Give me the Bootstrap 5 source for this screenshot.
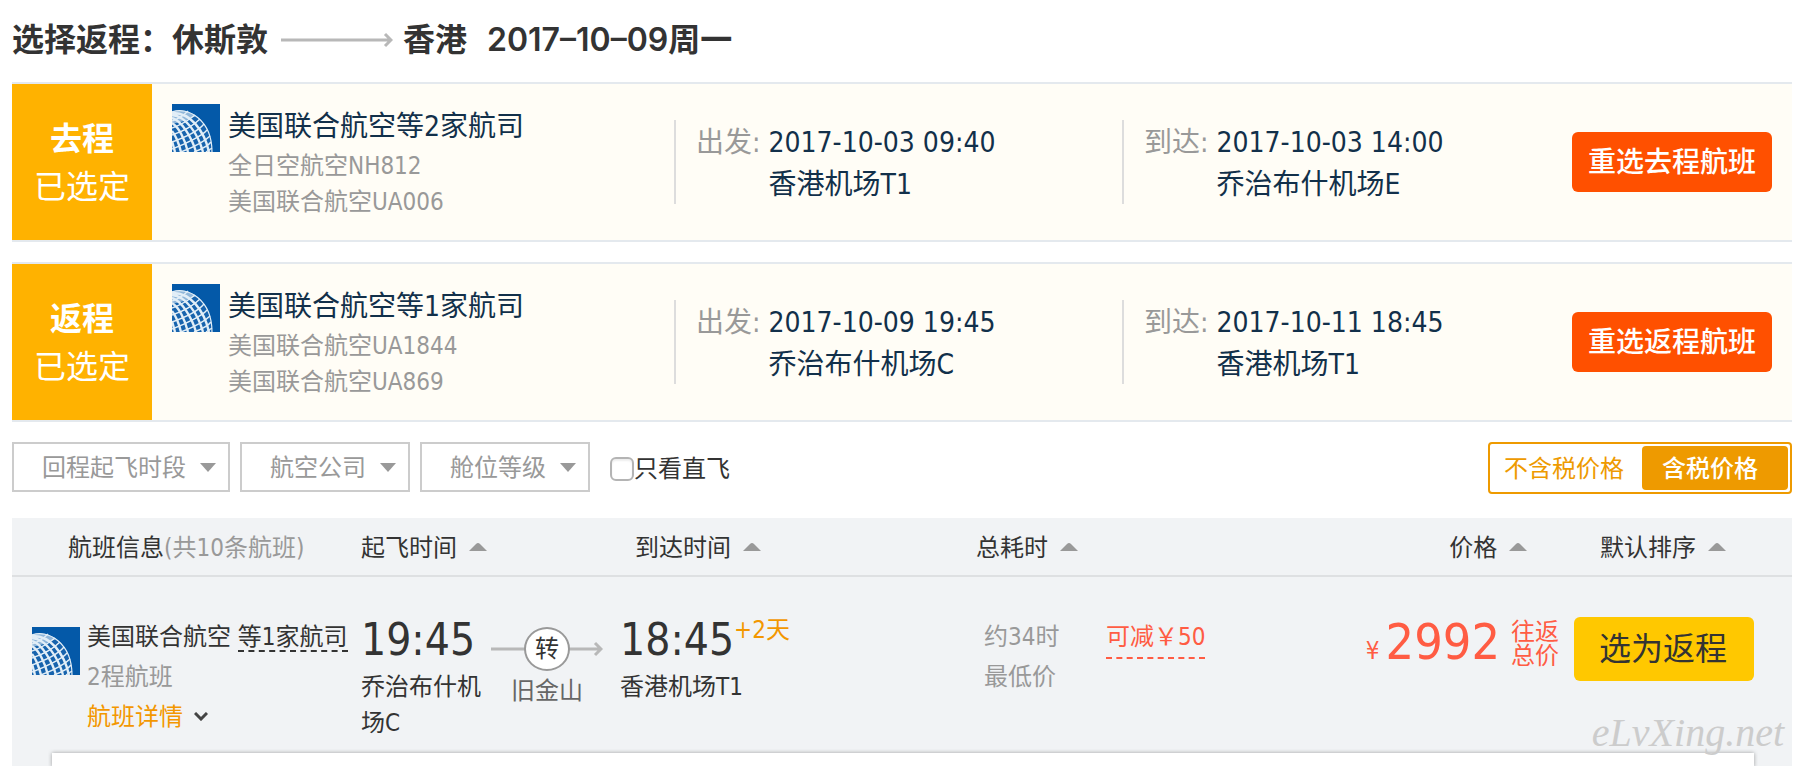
<!DOCTYPE html>
<html lang="zh-CN">
<head>
<meta charset="utf-8">
<meta name="viewport" content="width=device-width, initial-scale=1">
<title>选择返程</title>
<link href="https://cdn.jsdelivr.net/npm/bootstrap@5.3.0/dist/css/bootstrap.min.css" rel="stylesheet">
<style>
  body { font-family: "DejaVu Sans Condensed", "Noto Sans CJK SC", sans-serif; font-size: 24px; line-height: 36px; color: #333; background: #fff; }
  .page { padding: 16px 2px 0 12px; }
  .trip-title { font-family: Inter, "Noto Sans CJK SC", sans-serif; font-size: 32px; font-weight: 600; line-height: 48px; margin: 0 0 18px; }
  .trip-title svg { margin: 0 10px 0 13px; }
  .trip-title .day { margin-left: 20px; }
  .trip { display: grid; grid-template-columns: 140px 522fr 448fr 450fr 200px; align-items: center; height: 160px; padding-right: 20px; margin-bottom: 20px; background: #fffdf6; border-top: 2px solid #e4e9ee; border-bottom: 2px solid #e4e9ee; color: #12304a; }
  .trip-tag { background: #ffb200; color: #fff; font-size: 32px; line-height: 48px; padding-top: 2px; }
  .carrier { padding: 0 0 0 20px; gap: 8px; }
  .carrier h2 { font-size: 28px; line-height: 42px; margin: 0; padding-top: 2px; font-weight: 400; }
  .muted { color: #999; }
  .leg { height: 84px; border-left: 2px solid #ddd; padding: 2px 0 0 20px; gap: 8px; font-size: 28px; line-height: 42px; margin: 0; }
  .leg dt { font-weight: 400; color: #999; }
  .leg dd { margin: 0; }
  .btn-rechoose { background: #ff5000; color: #fff; font-size: 28px; line-height: 42px; font-weight: 500; height: 60px; border: 0; border-radius: 6px; padding: 2px 0 0; white-space: nowrap; }
  .btn-rechoose:hover { background: #e64800; color: #fff; }
  .filters { gap: 10px; margin-bottom: 24px; }
  .filter-pick { width: auto; height: 50px; border: 2px solid #ccc; border-radius: 0; padding: 2px 40px 0 28px; font-size: 24px; line-height: 36px; color: #999; background-color: #fff; background-image: url("data:image/svg+xml,%3Csvg xmlns='http://www.w3.org/2000/svg' viewBox='0 0 16 9'%3E%3Cpath d='M0 0h16L8 9z' fill='%23999'/%3E%3C/svg%3E"); background-size: 16px 9px; background-position: right 12px center; }
  .filter-pick:first-child { width: 218px; }
  .filter-pick:not(:first-child) { width: 170px; }
  .direct { height: 52px; margin-left: 10px; padding-top: 2px; }
  .direct .form-check-input { width: 24px; height: 24px; margin: 0; border: 2px solid #b4b4b4; border-radius: 6px; box-shadow: inset 0 2px 2px #eee; }
  .tax-switch { border: 2px solid #ee9a00; border-radius: 4px; padding: 2px; }
  .tax-switch .btn { height: 44px; border: 0; border-radius: 4px; font-size: 24px; line-height: 36px; padding: 2px 18px 0 12px; color: #ee9a00; }
  .tax-switch .btn.active { background: #ee9a00; color: #fff; font-weight: 500; padding: 2px 30px 0 20px; }
  .results { background: #f1f3f5; }
  .flights { table-layout: fixed; width: 100%; margin: 0; }
  .flights th { height: 58px; padding: 2px 0 0; font-weight: 400; border-bottom: 2px solid #dee0e2; white-space: nowrap; }
  .flights td { padding: 40px 0 12px; vertical-align: top; line-height: 40px; }
  .flights th:first-child { padding-left: 56px; }
  .flights th.to-arrive { padding-left: 15px; }
  .flights th.to-price { padding-right: 47px; text-align: right; }
  .flights th.to-sort { padding-left: 26px; }
  .flights td.spent { padding-left: 8px; }
  .flights td:first-child { padding-left: 20px; }
  .sort { color: inherit; text-decoration: none; }
  .sort svg { margin-left: 5px; vertical-align: 5px; }
  .c-info { width: 349px; } .c-leave { width: 129px; } .c-via { width: 130px; } .c-arrive { width: 20%; }
  .c-spent { width: 130px; } .c-price { width: 234px; } .c-pick { width: 218px; }
  .airline { gap: 7px; white-space: nowrap; }
  .airline > svg { margin-top: 10px; }
  .dashed { display: inline-block; color: inherit; line-height: 26px; border-bottom: 2px dashed; text-decoration: none; }
  .detail { color: #f39700; text-decoration: none; }
  .detail svg { margin-left: 4px; vertical-align: 4px; }
  .clock { font-size: 44px; line-height: 46px; margin-bottom: 6px; }
  .clock sup { font-size: 24px; line-height: 26px; color: #f39700; top: 0; vertical-align: top; }
  .port { line-height: 36px; width: 126px; }
  .via { width: 114px; color: #666; text-align: center; }
  .via-line { display: grid; justify-items: center; align-items: center; margin-top: 10px; }
  .via-line > * { grid-area: 1 / 1; }
  .via-dot { width: 46px; height: 44px; border: 2px solid #999; border-radius: 50%; background: #fff; color: #333; line-height: 40px; z-index: 1; }
  .red { color: #ff5c43; }
  .discount { line-height: 40px; }
  .fare { gap: 11px; padding-right: 15px; }
  .fare .sum { font-size: 50px; line-height: 50px; }
  .fare .yen { font-size: 24px; margin-right: 6px; }
  .fare .kind { line-height: 24px; width: 48px; margin-top: 3px; }
  .btn-choose { width: 180px; height: 64px; background: #ffc800; color: #333; border: 0; border-radius: 6px; font-size: 32px; line-height: 48px; padding: 0 2px 0 0; }
  .btn-choose:hover { background: #f0bc00; }
  .panel { margin: 0 38px 0 40px; min-height: 14px; background: #fff; box-shadow: 0 0 4px rgba(0,0,0,.35); clip-path: inset(-4px -4px 0 -4px); }
  .site-mark { right: 8px; bottom: 10px; font: italic 40px/48px "Liberation Serif", serif; color: #ccc; }
</style>
</head>
<body>
<svg class="d-none" aria-hidden="true">
  <symbol id="globe" viewBox="0 0 48 48">
    <path fill="#0459a8" d="M0 0h48v48H0z"/>
    <path fill="#1763ad" d="M0 8C16 2 40 16 40 48H0z"/>
    <path fill="#c3daed" d="M0 8C8 5 18 7 24 12L12 17 0 20z" opacity=".7"/>
    <g fill="none" stroke="#e2eef7">
      <path d="M0 8C16 2 40 16 40 48" stroke-width="1.2"/>
      <path stroke-width="2.4" d="M0 9C18 8 32 26 37 48M0 11C14 12 26 30 31 48M0 14C10 17 20 34 24 48M0 19C7 23 13 36 16 48M0 27C4 32 7 40 9 48M0 37 3 48"/>
      <path stroke-width="1.4" d="M0 17C6 15 12 11 16 7M0 24C9 21 18 15 23 11M0 31C12 27 23 20 28 15M0 38C14 33 27 26 32 20M0 45C16 39 31 31 35 26M9 48C22 43 34 36 38 32M22 48C30 45 36 42 39 38M34 48L40 44"/>
    </g>
  </symbol>
  <symbol id="up" viewBox="0 0 18 8"><path fill="#999" d="M0 8 7 1q2-2 4 0l7 7z"/></symbol>
  <symbol id="long-arrow" viewBox="0 0 112 16">
    <path d="M0 8h110M104 2l6 6-6 6" fill="none" stroke="#b8b8b8" stroke-width="3"/>
  </symbol>
</svg>

<div class="page d-flex flex-column min-vh-100">
  <h1 class="trip-title d-flex align-items-center">选择返程：休斯敦<svg width="112" height="16" role="img" aria-label="至"><use href="#long-arrow"/></svg>香港<span class="day">2017–10–09周一</span></h1>

  <section class="trip">
    <div class="trip-tag h-100 d-flex flex-column justify-content-center text-center"><strong>去程</strong><span>已选定</span></div>
    <div class="carrier d-flex">
      <svg width="48" height="48" class="flex-shrink-0"><use href="#globe"/></svg>
      <div><h2>美国联合航空等2家航司</h2><div class="muted">全日空航空NH812</div><div class="muted">美国联合航空UA006</div></div>
    </div>
    <dl class="leg d-flex"><dt>出发:</dt><dd>2017-10-03 09:40<br>香港机场T1</dd></dl>
    <dl class="leg d-flex"><dt>到达:</dt><dd>2017-10-03 14:00<br>乔治布什机场E</dd></dl>
    <button type="button" class="btn btn-rechoose">重选去程航班</button>
  </section>

  <section class="trip">
    <div class="trip-tag h-100 d-flex flex-column justify-content-center text-center"><strong>返程</strong><span>已选定</span></div>
    <div class="carrier d-flex">
      <svg width="48" height="48" class="flex-shrink-0"><use href="#globe"/></svg>
      <div><h2>美国联合航空等1家航司</h2><div class="muted">美国联合航空UA1844</div><div class="muted">美国联合航空UA869</div></div>
    </div>
    <dl class="leg d-flex"><dt>出发:</dt><dd>2017-10-09 19:45<br>乔治布什机场C</dd></dl>
    <dl class="leg d-flex"><dt>到达:</dt><dd>2017-10-11 18:45<br>香港机场T1</dd></dl>
    <button type="button" class="btn btn-rechoose">重选返程航班</button>
  </section>

  <form class="filters d-flex align-items-start">
    <select class="form-select filter-pick" aria-label="回程起飞时段"><option>回程起飞时段</option></select>
    <select class="form-select filter-pick" aria-label="航空公司"><option>航空公司</option></select>
    <select class="form-select filter-pick" aria-label="舱位等级"><option>舱位等级</option></select>
    <div class="direct d-flex align-items-center">
      <input class="form-check-input" type="checkbox" id="direct"><label for="direct">只看直飞</label>
    </div>
    <div class="tax-switch d-flex ms-auto">
      <button type="button" class="btn">不含税价格</button><button type="button" class="btn active" aria-pressed="true">含税价格</button>
    </div>
  </form>

  <main class="results position-relative flex-grow-1 d-flex flex-column">
    <table class="flights">
      <colgroup><col class="c-info"><col class="c-leave"><col class="c-via"><col class="c-arrive"><col class="c-spent"><col><col class="c-price"><col class="c-pick"></colgroup>
      <thead>
        <tr>
          <th scope="col">航班信息<span class="muted">(共10条航班)</span></th>
          <th scope="col" colspan="2"><a class="sort" href="#">起飞时间 <svg width="18" height="8"><use href="#up"/></svg></a></th>
          <th scope="col" class="to-arrive"><a class="sort" href="#">到达时间 <svg width="18" height="8"><use href="#up"/></svg></a></th>
          <th scope="col" colspan="2"><a class="sort" href="#">总耗时 <svg width="18" height="8"><use href="#up"/></svg></a></th>
          <th scope="col" class="to-price"><a class="sort" href="#">价格 <svg width="18" height="8"><use href="#up"/></svg></a></th>
          <th scope="col" class="to-sort"><a class="sort" href="#">默认排序 <svg width="18" height="8"><use href="#up"/></svg></a></th>
        </tr>
      </thead>
      <tbody>
        <tr>
          <td>
            <div class="airline d-flex">
              <svg width="48" height="48" class="flex-shrink-0"><use href="#globe"/></svg>
              <div>
                <div>美国联合航空 <a class="dashed" href="#">等1家航司</a></div>
                <div class="muted">2程航班</div>
                <a class="detail" href="#">航班详情 <svg width="14" height="9" viewBox="0 0 14 9"><path d="m1 1 6 6 6-6" fill="none" stroke="#444" stroke-width="3"/></svg></a>
              </div>
            </div>
          </td>
          <td><div class="clock">19:45</div><div class="port">乔治布什机场C</div></td>
          <td>
            <div class="via">
              <div class="via-line"><svg width="112" height="16"><use href="#long-arrow"/></svg><span class="via-dot">转</span></div>
              旧金山
            </div>
          </td>
          <td><div class="clock">18:45<sup>+2天</sup></div><div class="port text-nowrap">香港机场T1</div></td>
          <td class="spent muted">约34时<br>最低价</td>
          <td><a href="#" class="dashed discount red">可减￥50</a></td>
          <td><div class="fare red d-flex justify-content-end text-nowrap"><span class="sum"><span class="yen">¥</span>2992</span><span class="kind">往返<br>总价</span></div></td>
          <td><button type="button" class="btn btn-choose">选为返程</button></td>
        </tr>
      </tbody>
    </table>
    <div class="panel flex-grow-1"></div>
    <div class="site-mark position-absolute">eLvXing.net</div>
  </main>
</div>
<script src="https://cdn.jsdelivr.net/npm/bootstrap@5.3.0/dist/js/bootstrap.bundle.min.js"></script>
</body>
</html>
